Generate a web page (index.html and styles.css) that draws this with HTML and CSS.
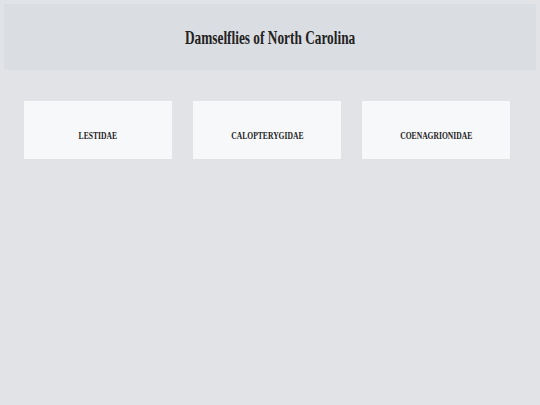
FILE: index.html
```html
<!DOCTYPE html>
<html lang="en">
<head>
    <meta charset="UTF-8">
    <meta name="viewport" content="width=device-width, initial-scale=1.0">
    <title>Damselflies of North Carolina</title>
    <link rel="stylesheet" href="styles.css">
</head>
<body>

<!-- page title -->
<header class="site-header">
    <h1 class="site-title"><span>Damselflies of North Carolina</span></h1>
</header>

<!-- family cards -->
<div class="family-list">
    <div class="family-card"><span>LESTIDAE</span></div>
    <div class="family-card"><span>CALOPTERYGIDAE</span></div>
    <div class="family-card"><span>COENAGRIONIDAE</span></div>
</div>

</body>
</html>
```

FILE: styles.css
```css
/* page */
body {
    font-family: 'Liberation Serif', 'Times New Roman', serif;
    background-color: #e1e3e7;
    color: #222;
    margin: 0;
    padding: 4px;
}

/* header bar */
.site-header {
    background-color: #dadde1;
    height: 66px;
    display: flex;
    align-items: center;
    justify-content: center;
}

.site-title {
    margin: 0;
    font-size: 18px;
    font-weight: bold;
    padding-top: 2px;
}

.site-title span,
.family-card span {
    display: inline-block;
    transform: scaleX(0.74);
}

/* cards */
.family-list {
    display: flex;
    gap: 21px;
    padding-left: 20px;
    margin-top: 31px;
}

.family-card {
    width: 148px;
    height: 58px;
    background-color: #f7f8fa;
    display: flex;
    align-items: center;
    justify-content: center;
    padding-top: 9px;
    box-sizing: border-box;
    font-size: 11px;
    font-weight: bold;
}

.family-card span {
    transform: scaleX(0.69);
}
```
